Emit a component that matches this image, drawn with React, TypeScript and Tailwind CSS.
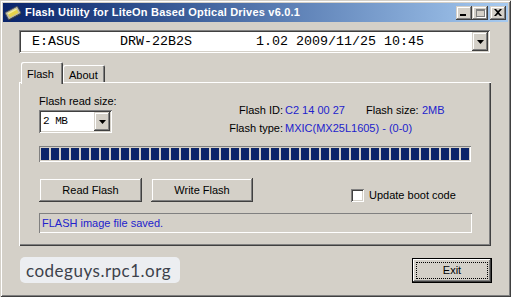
import React from 'react';

const raised =
  'shadow-[inset_-1px_-1px_#404040,inset_1px_1px_#d4d0c8,inset_-2px_-2px_#808080,inset_2px_2px_#ffffff]';
const sunken =
  'shadow-[inset_1px_1px_#808080,inset_-1px_-1px_#ffffff,inset_2px_2px_#404040,inset_-2px_-2px_#d4d0c8]';
const thinSunken = 'shadow-[inset_1px_1px_#808080,inset_-1px_-1px_#ffffff]';

export default function App() {
  return (
    <div className="w-[511px] h-[297px] bg-[#d4d0c8] p-[3px] flex flex-col text-[11px] text-black font-['Liberation_Sans',Arial,sans-serif] shadow-[inset_1px_1px_#d4d0c8,inset_-1px_-1px_#404040,inset_2px_2px_#ffffff,inset_-2px_-2px_#808080]">
      <TitleBar />

      <div className="pl-[16px] flex flex-col">
        {/* drive select */}
        <div className={`mt-[8px] w-[471px] h-[23px] bg-white flex items-center justify-between pl-[13px] pr-[2px] ${sunken}`}>
          <span className="whitespace-pre text-[13.33px] leading-none font-['Liberation_Mono',monospace]">
            {'E:ASUS     DRW-22B2S        1.02 2009/11/25 10:45'}
          </span>
          <DropButton className="w-[16px] h-[19px]" />
        </div>

        {/* tabs */}
        <div className="mt-[9px] h-[20px] flex items-end pl-[2px]">
          <div className="relative z-10 -mb-[2px] w-[42px] h-[22px] bg-[#d4d0c8] rounded-t-[2px] pl-[6px] pt-[4px] shadow-[inset_1px_1px_#ffffff,inset_-1px_0_#404040,inset_-2px_0_#808080]">
            Flash
          </div>
          <div className="w-[42px] h-[17px] rounded-t-[2px] pl-[6px] pt-[2px] shadow-[inset_1px_1px_#ffffff,inset_-1px_0_#404040,inset_-2px_0_#808080]">
            About
          </div>
        </div>

        {/* tab panel */}
        <div className="w-[472px] h-[164px] pl-[20px] pt-[13px] flex flex-col shadow-[inset_1px_1px_#ffffff,inset_-1px_-1px_#404040,inset_-2px_-2px_#808080]">
          <div className="flex items-start">
            <div className="w-[73px] flex flex-col">
              <span className="leading-[13px] whitespace-nowrap">Flash read size:</span>
              <div className={`mt-[2px] h-[23px] bg-white flex items-center justify-between pl-[4px] pr-[2px] ${sunken}`}>
                <span className="text-[11px] leading-none font-['Liberation_Mono',monospace] tracking-[-0.5px]">2 MB</span>
                <DropButton className="w-[16px] h-[19px]" />
              </div>
            </div>

            <div className="ml-[116px] mt-[6px] grid grid-cols-[57px_81px_56px_auto] leading-[18px] whitespace-nowrap">
              <span className="text-right pr-[2px]">Flash ID:</span>
              <span className="text-[#2222cc]">C2 14 00 27</span>
              <span>Flash size:</span>
              <span className="text-[#2222cc]">2MB</span>
              <span className="text-right pr-[2px]">Flash type:</span>
              <span className="col-span-3 text-[#2222cc]">MXIC(MX25L1605) - (0-0)</span>
            </div>
          </div>

          {/* progress */}
          <div className={`mt-[9px] w-[432px] h-[16px] p-[2px] flex gap-[2px] ${thinSunken}`}>
            {Array.from({ length: 43 }).map((_, i) => (
              <div key={i} className="w-[8px] h-[12px] bg-[#0a246a]" />
            ))}
          </div>

          <div className="mt-[16px] flex items-start">
            <button className={`w-[103px] h-[24px] bg-[#d4d0c8] ${raised}`}>Read Flash</button>
            <button className={`ml-[9px] w-[102px] h-[24px] bg-[#d4d0c8] ${raised}`}>Write Flash</button>
            <label className="ml-[98px] mt-[11px] flex items-center gap-[5px]">
              <span className={`w-[13px] h-[13px] bg-white ${sunken}`} />
              <span className="leading-[13px]">Update boot code</span>
            </label>
          </div>

          {/* status */}
          <div className={`mt-[11px] w-[433px] h-[20px] flex items-center pl-[3px] text-[#2222cc] ${thinSunken}`}>
            FLASH image file saved.
          </div>
        </div>

        {/* footer */}
        <div className="mt-[11px] w-[473px] flex items-start justify-between">
          <div className="ml-[1px] w-[160px] h-[26px] rounded-[5px] bg-[#eceef1] flex items-center pl-[6px]">
            <span className="text-[17px] leading-none text-[#3d424b] font-['Lato',sans-serif] tracking-[0.5px]">
              codeguys.rpc1.org
            </span>
          </div>
          <button className="mt-[1px] w-[80px] h-[25px] bg-[#d4d0c8] border border-black p-[3px] shadow-[inset_-1px_-1px_#404040,inset_1px_1px_#ffffff,inset_-2px_-2px_#808080]">
            <div className="w-full h-full border border-dotted border-black flex items-center justify-center">
              Exit
            </div>
          </button>
        </div>
      </div>
    </div>
  );
}

function TitleBar() {
  return (
    <div className="h-[19px] bg-linear-to-r from-[#0a246a] to-[#a6caf0] flex items-center pl-[1px] pr-[2px]">
      <ChipIcon />
      <span className="ml-[3px] text-white font-bold text-[11px] leading-none tracking-[0.2px]">
        Flash Utility for LiteOn Based Optical Drives v6.0.1
      </span>
      <div className="ml-auto flex items-center">
        <CaptionButton>
          <div className="absolute left-[4px] top-[8px] w-[6px] h-[2px] bg-black" />
        </CaptionButton>
        <CaptionButton>
          <div className="absolute left-[4px] top-[3px] w-[9px] h-[8px] border border-t-2 border-[#808080] shadow-[1px_1px_#ffffff]" />
        </CaptionButton>
        <div className="w-[2px]" />
        <CaptionButton>
          <svg className="absolute left-[4px] top-[3px]" width="8" height="7" viewBox="0 0 8 7">
            <path d="M0 0h2l2 2 2-2h2L5 3.5 8 7H6L4 5 2 7H0l3-3.5z" fill="#000" />
          </svg>
        </CaptionButton>
      </div>
    </div>
  );
}

function CaptionButton({ children }: { children?: React.ReactNode }) {
  return <div className={`relative w-[16px] h-[14px] bg-[#d4d0c8] ${raised}`}>{children}</div>;
}

function DropButton({ className }: { className: string }) {
  return (
    <div className={`relative bg-[#d4d0c8] flex items-center justify-center ${raised} ${className}`}>
      <svg width="7" height="4" viewBox="0 0 7 4">
        <path d="M0 0h7L3.5 4z" fill="#000" />
      </svg>
    </div>
  );
}

function ChipIcon() {
  return (
    <svg width="18" height="16" viewBox="0 0 18 16">
      <g transform="rotate(-28 9 8)">
        <rect x="2" y="4" width="14" height="8" rx="1" fill="#b8b8b0" stroke="#505048" strokeWidth="0.8" />
        <rect x="4" y="5.5" width="10" height="5" fill="#e6d24a" />
        <rect x="4" y="5.5" width="10" height="1.5" fill="#f4ec9a" />
        <path d="M3 12v1.5M5 12v1.5M7 12v1.5M9 12v1.5M11 12v1.5M13 12v1.5M15 12v1.5" stroke="#303030" strokeWidth="0.8" />
      </g>
    </svg>
  );
}
